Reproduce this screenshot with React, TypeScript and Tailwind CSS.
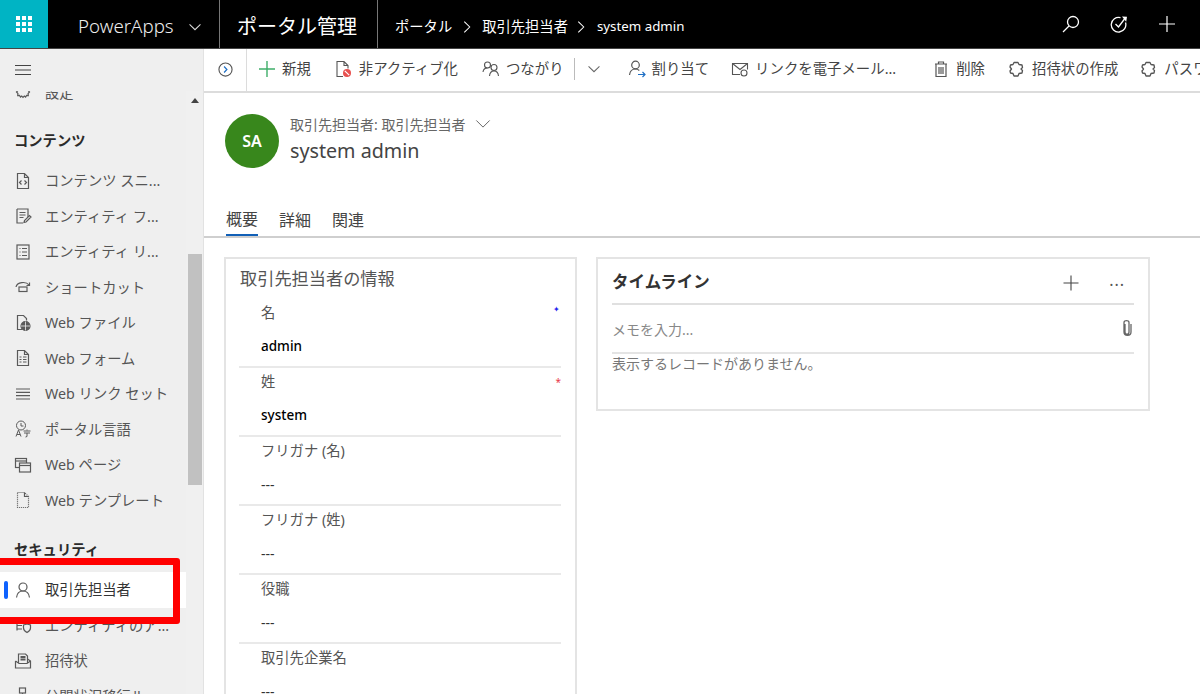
import React from "react";

const S = ({ children, className = "w-[18px] h-[18px]", w = 1.2 }: { children: React.ReactNode; className?: string; w?: number }) => (
  <svg viewBox="0 0 18 18" fill="none" stroke="currentColor" strokeWidth={w} className={className}>{children}</svg>
);

const gear = <path d="M6.5 4l1.2 1L9 3.6 10.3 5l1.3-1 1 1.6 1.7-.2-.2 2L15.5 9l-1.4 1.5.2 2-1.7-.1-1 1.6-1.3-1L9 14.4 7.7 13l-1.2 1-1-1.6-1.8.1.2-2L2.5 9l1.4-1.5-.2-2 1.8.1z" />;

const navIcons: Record<string, React.ReactNode> = {
  gear: <S>{gear}</S>,
  code: <S><path d="M3.5 1.5h7l4 4v11h-11z M10.5 1.5v4h4" /><path d="M7.5 8.5L5.5 10.5l2 2M10.5 8.5l2 2-2 2" /></S>,
  form: <S><path d="M3 2h11v8M3 2v14h6" /><path d="M5.5 5.5h6M5.5 8h6M5.5 10.5h4" /><path d="M10 15.5l.5-2 5-5 1.5 1.5-5 5z" /></S>,
  list: <S><rect x="3" y="2" width="12" height="14" /><path d="M5.5 5.5h1M8 5.5h5M5.5 9h1M8 9h5M5.5 12.500h1M8 12.500h5" /></S>,
  shortcut: <S><path d="M2 9c1-5 10-6 13-2" /><path d="M15.500 4.500V7.500h-3" /><rect x="5" y="9" width="8" height="4.500" /></S>,
  webfile: <S><path d="M8 15.500H3.500v-14h6l3 3v2" /><circle cx="11.500" cy="12" r="4.500" fill="currentColor" /><path d="M7 12h9M11.500 7.500v9" stroke="#efefef" strokeWidth="0.8" /></S>,
  webform: <S><path d="M3.500 1.500h7l4 4v11h-11z M10.500 1.500v4h4" /><path d="M5.500 8h2M9 8h3.500M5.500 10.500h2M9 10.500h3.500M5.500 13h2M9 13h3.500" /></S>,
  lines: <S><path d="M2 4h14M2 7.300h14M2 10.600h14M2 14h14" /></S>,
  lang: <S w={1}><circle cx="7" cy="5.500" r="4.500" /><path d="M7 3v3h2.500" /><path d="M2 16.500L4.500 10 7 16.500M3 14.500h3M9.500 11h7M13 9.500v1M10 13h6M13 13v3.500l-1.500.5" /></S>,
  page: <S><rect x="1.500" y="2.500" width="11" height="9" /><path d="M1.500 5h11" /><rect x="5.500" y="7" width="11" height="9" fill="#efefef" /><path d="M5.500 9.500h11" /></S>,
  template: <S><path d="M3.500 1.500h7l4 4v11h-11z" strokeDasharray="1 1" /><path d="M10.500 1.500v4h4" /></S>,
  person: <S><circle cx="9" cy="6" r="4" /><path d="M2.500 16.500c.5-4 3-6.500 6.500-6.500s6 2.500 6.500 6.500" /></S>,
  shield: <S><path d="M3 2.500h11M3 6h8M3 9.500h5M3 13h5M3 2.500v12" /><path d="M9.500 9l3.500-1 3.500 1v3c0 2-1.500 3.500-3.500 4.500-2-1-3.500-2.500-3.500-4.500z" /></S>,
  invite: <S><path d="M1.500 9v7h15V9l-3-2" /><path d="M4.500 11V2h7l2 2v7" /><path d="M1.500 9L5 11.500h8L16.500 9" /><path d="M6.500 5h5M6.500 7.500h5" strokeWidth="1.800" /></S>,
  workflow: <S><rect x="5.500" y="1" width="6" height="5" /><path d="M8.500 6v5" /><rect x="3" y="11" width="11" height="5" /></S>,
};

const NavRow = ({ icon, label, selected }: { icon: string; label: string; selected?: boolean }) => (
  <div className={`h-[35.5px] shrink-0 flex items-center relative text-[14.3px] text-[#555] whitespace-nowrap ${selected ? "bg-white" : ""}`}>
    {selected && <span className="absolute left-[4px] top-[9px] h-[18px] w-[4px] rounded-sm bg-[#0f62fe]" />}
    <span className="w-[45px] pl-[14px] shrink-0 text-[#5a5a5a]">{navIcons[icon]}</span>
    <span className={selected ? "text-[#333]" : ""}>{label}</span>
  </div>
);

const Heading = ({ children, className = "mt-[13px]" }: { children: React.ReactNode; className?: string }) => (
  <div className={`h-9 mb-[4px] pl-[14px] flex items-center text-[14.3px] font-bold text-[#2b2b2b] ${className}`}>{children}</div>
);

const Sidebar = () => (
  <aside className="w-[204px] shrink-0 bg-[#efefef] border-r border-[#e2e2e2] flex flex-col relative">
    <div className="h-[42px] shrink-0 pl-[14px] flex items-center text-[#444]">
      <S className="w-[18px] h-[18px]" w={1.1}><path d="M1 4.500h16M1 9h16M1 13.500h16" /></S>
    </div>
    <div className="flex-1 flex min-h-0">
      <div className="w-[186px] shrink-0 overflow-hidden">
        <div className="-mt-[16.5px] flex flex-col">
          <NavRow icon="gear" label="設定" />
          <Heading>コンテンツ</Heading>
          <NavRow icon="code" label="コンテンツ スニ..." />
          <NavRow icon="form" label="エンティティ フ..." />
          <NavRow icon="list" label="エンティティ リ..." />
          <NavRow icon="shortcut" label="ショートカット" />
          <NavRow icon="webfile" label="Web ファイル" />
          <NavRow icon="webform" label="Web フォーム" />
          <NavRow icon="lines" label="Web リンク セット" />
          <NavRow icon="lang" label="ポータル言語" />
          <NavRow icon="page" label="Web ページ" />
          <NavRow icon="template" label="Web テンプレート" />
          <Heading className="mt-[14px]">セキュリティ</Heading>
          <NavRow icon="person" label="取引先担当者" selected />
          <NavRow icon="shield" label="エンティティのア..." />
          <NavRow icon="invite" label="招待状" />
          <NavRow icon="workflow" label="公開状況移行ル..." />
        </div>
      </div>
      <div className="w-[17px] shrink-0 bg-[#f0f0f0] flex flex-col items-center pt-[7px]">
        <svg viewBox="0 0 8 5" className="w-2 h-[5px] text-[#444]" fill="currentColor"><path d="M4 0l4 5H0z" /></svg>
        <div className="w-[14px] h-[231px] mt-[151px] bg-[#c1c1c1]" />
      </div>
    </div>
    <div className="absolute -left-[8px] top-[509px] w-[188px] h-[66px] border-[7px] border-[#ff0000] rounded-[3px]" />
  </aside>
);

const TopBar = () => (
  <header className="h-[49px] shrink-0 bg-black text-white flex items-center border-b border-[#444]">
    <div className="w-[48px] h-full bg-[#00b4c4] grid grid-cols-3 gap-[2px] content-center justify-center px-[16px]">
      {Array.from({ length: 9 }).map((_, i) => <span key={i} className="w-[4px] h-[4px] bg-white" />)}
    </div>
    <span className="ml-[30px] mt-[5px] w-[96px] text-[18.7px] font-light text-[#eee] whitespace-nowrap">PowerApps</span>
    <S className="ml-[14px] mt-[5px] w-[14px] h-[14px] text-[#ddd]" w={1.3}><path d="M2 5.500l7 7 7-7" /></S>
    <span className="ml-[17px] w-px h-full bg-[#777]" />
    <span className="ml-[17px] mt-[5px] w-[122px] text-[20px] whitespace-nowrap">ポータル管理</span>
    <span className="ml-[18px] w-px h-full bg-[#777]" />
    <span className="ml-[17px] mt-[5px] text-[14.3px] whitespace-nowrap">ポータル</span>
    <S className="ml-[8px] mt-[5px] w-[14px] h-[14px]" w={1.3}><path d="M5.500 2l7 7-7 7" /></S>
    <span className="ml-[8px] mt-[5px] text-[14.3px] whitespace-nowrap">取引先担当者</span>
    <S className="ml-[6px] mt-[5px] w-[14px] h-[14px]" w={1.3}><path d="M5.500 2l7 7-7 7" /></S>
    <span className="ml-[9px] mt-[5px] text-[13.3px] whitespace-nowrap">system admin</span>
    <div className="ml-auto flex items-center gap-[30px] pr-[24px]">
      <S className="w-[18px] h-[18px]" w={1.3}><circle cx="11" cy="7" r="5.500" /><path d="M7 11l-6 6" /></S>
      <S className="w-[18px] h-[18px]" w={1.3}>
        <path d="M15.500 7.500A7.300 7.300 0 1 1 10.500 2.700" />
        <path d="M5.500 9l3 3 6-8" />
        <path d="M12 1.500l5 .2-.8 5z" fill="currentColor" stroke="none" />
      </S>
      <S className="w-[18px] h-[18px]" w={1.2}><path d="M9 1v16M1 9h16" /></S>
    </div>
  </header>
);

const Cmd = ({ icon, label, className = "" }: { icon: React.ReactNode; label: string; className?: string }) => (
  <div className={`flex items-center shrink-0 whitespace-nowrap text-[14.4px] text-[#444] ${className}`}>
    <span className="w-[24px] shrink-0 text-[#555]">{icon}</span>
    <span>{label}</span>
  </div>
);

const puzzle = <S w={1.300}><path d="M6 2.500h4l1 2 3 .5.500 2.500L13 9l1.500 1.500-.5 2.500-3 .5-1 2.500H6l-1-2.500-2.500-.5L2 11l1.500-2L2 7l.5-2 2.500-.5z" strokeLinejoin="round" /></S>;

const CommandBar = () => (
  <div className="h-[44px] shrink-0 border-b-2 border-[#dcdcdc] flex items-center overflow-hidden pb-[2px]">
    <div className="w-[43px] h-[44px] shrink-0 border-r border-[#dcdcdc] flex items-center justify-center">
      <svg viewBox="0 0 16 16" className="w-[15px] h-[15px]" fill="none">
        <circle cx="8" cy="8" r="7" stroke="#555" strokeWidth="1.200" />
        <path d="M6.500 4.800L9.500 8l-3 3.200" stroke="#1f6fc4" strokeWidth="1.300" />
      </svg>
    </div>
    <Cmd className="ml-[11px]" label="新規" icon={<span className="text-[#3fae6a]"><S w={1.400}><path d="M9 1v16M1 9h16" /></S></span>} />
    <Cmd className="ml-[24px]" label="非アクティブ化" icon={
      <svg viewBox="0 0 18 18" className="w-[18px] h-[18px] -ml-[1px]" fill="none" stroke="currentColor" strokeWidth="1.100">
        <path d="M9 16.500H3V1.500h7l4 4v3M10 1.500v4h4" />
        <circle cx="13" cy="13" r="4" fill="#e8504f" stroke="none" />
        <path d="M10.800 10.800l4.400 4.400" stroke="#fff" strokeWidth="1.200" />
      </svg>
    } />
    <Cmd className="ml-[24px]" label="つながり" icon={<S w={1.100}><circle cx="5.500" cy="5" r="3" /><path d="M1 12c.3-2.500 2-4 4.500-4" /><circle cx="12" cy="7.500" r="3" /><path d="M7.500 16c.3-3 2-5 4.500-5s4.200 2 4.500 5" /></S>} />
    <span className="ml-[10px] w-px h-[22px] bg-[#bbb] shrink-0" />
    <S className="ml-[12px] w-[14px] h-[14px] text-[#666] shrink-0" w={1.300}><path d="M2 5.500l7 7 7-7" /></S>
    <Cmd className="ml-[27px]" label="割り当て" icon={
      <svg viewBox="0 0 18 18" className="w-[18px] h-[18px]" fill="none" stroke="currentColor" strokeWidth="1.200">
        <circle cx="7.500" cy="5" r="3.800" />
        <path d="M1.500 15c.4-3.500 2.800-6 6-6 1.500 0 2.800.5 3.800 1.500" />
        <path d="M10 14.500h7M14.500 12l2.500 2.500-2.500 2.500" stroke="#1f6fc4" />
      </svg>
    } />
    <Cmd className="ml-[22px]" label="リンクを電子メール..." icon={
      <S w={1.100}><path d="M9 14.500H1.500v-11h15v6" /><path d="M1.500 3.500L9 9.500l7.500-6" /><circle cx="13" cy="13" r="3" /></S>
    } />
    <Cmd className="ml-[36px]" label="削除" icon={<S w={1.200}><path d="M3 4h12M6.500 4V2h5v2M4 4v12.500h10V4M7 7v7M9 7v7M11 7v7" /></S>} />
    <Cmd className="ml-[23px]" label="招待状の作成" icon={puzzle} />
    <Cmd className="ml-[22px]" label="パスワードのリセット" icon={puzzle} />
  </div>
);

const Field = ({ label, value, mark, bold }: { label: string; value: string; mark?: "blue" | "red"; bold?: boolean }) => (
  <div className="h-[69px] shrink-0 border-b-2 border-[#e9e9e9] ml-[13px] mr-[14px] relative">
    <div className="h-[28px] pl-[22px] flex items-center text-[14.3px] text-[#555]">{label}</div>
    <div className={`h-[38px] pl-[22px] flex items-center ${bold ? "text-[13.5px] font-medium text-black" : "text-[14px] text-[#333]"}`}>{value}</div>
    {mark === "blue" && <span className="absolute right-[1px] top-[4px] text-[8px] leading-[12px] text-[#2222ee]">✦</span>}
    {mark === "red" && <span className="absolute right-[0px] top-[8px] text-[10px] leading-[12px] text-[#e83a4a]">*</span>}
  </div>
);

const Content = () => (
  <main className="flex-1 min-w-0 flex flex-col bg-white overflow-hidden">
    <CommandBar />
    <div className="h-[145px] shrink-0 flex flex-col border-b-2 border-[#cfcfcf]">
      <div className="flex pl-[21px] pt-[21px]">
        <div className="w-[54px] h-[54px] rounded-full bg-[#38871c] text-white flex items-center justify-center text-[16px] font-semibold">SA</div>
        <div className="ml-[11px] flex flex-col">
          <div className="h-[20px] flex items-center text-[14px] text-[#666]">
            取引先担当者: 取引先担当者
            <S className="ml-[10px] w-[16px] h-[16px] text-[#555]" w={1}><path d="M1.500 5l7.500 7.500L16.500 5" /></S>
          </div>
          <div className="h-[34px] flex items-center text-[19.700px] text-[#444]">system admin</div>
        </div>
      </div>
      <div className="mt-auto flex pl-[22px] gap-[21px] text-[16px] text-[#444]">
        <div className="h-[36px] pt-[4px] border-b-2 border-[#1160b7] -mb-[1px] relative flex items-center">概要</div>
        <div className="h-[36px] pt-[4px] flex items-center">詳細</div>
        <div className="h-[36px] pt-[4px] flex items-center">関連</div>
      </div>
    </div>
    <div className="flex-1 min-h-0 flex items-start pl-[20px] pr-[50px] pt-[19px] gap-[19px]">
      <section className="w-[353px] shrink-0 border-2 border-[#e4e4e4] flex flex-col h-[460px] overflow-hidden">
        <h2 className="h-[40px] pl-[14px] flex items-center text-[17.2px] text-[#555] font-normal shrink-0">取引先担当者の情報</h2>
        <div className="flex flex-col">
          <Field label="名" value="admin" mark="blue" bold />
          <Field label="姓" value="system" mark="red" bold />
          <Field label="フリガナ (名)" value="---" />
          <Field label="フリガナ (姓)" value="---" />
          <Field label="役職" value="---" />
          <Field label="取引先企業名" value="---" />
        </div>
      </section>
      <section className="flex-1 h-[154px] border-2 border-[#e4e4e4] px-[14px] flex flex-col">
        <div className="h-[46px] pt-[3px] shrink-0 border-b-2 border-[#e0e0e0] flex items-center">
          <span className="text-[16.5px] font-semibold text-[#333]">タイムライン</span>
          <S className="ml-auto mr-[29px] w-[18px] h-[18px] text-[#444]" w={1.100}><path d="M9 1.500v15M1.500 9h15" /></S>
          <span className="mr-[9px] text-[16px] leading-none text-[#555] -mt-[6px] tracking-[1px]">...</span>
        </div>
        <div className="h-[49px] pt-[2px] shrink-0 border-b-2 border-[#e4e4e4] flex items-center text-[14px] text-[#888]">
          <span>メモを入力...</span>
          <svg viewBox="0 0 10 18" className="ml-auto mr-[2px] -mt-[4px] w-[10px] h-[18px] text-[#666]" fill="none" stroke="currentColor" strokeWidth="1.300">
            <path d="M3 5v8c0 3 4 3 4 0V3.500C7 1 2 1 2 3.500V13c0 4.500 7 4.500 7 0V5" />
          </svg>
        </div>
        <div className="text-[14px] leading-[20px] text-[#777]">表示するレコードがありません。</div>
      </section>
    </div>
  </main>
);

export default function App() {
  return (
    <div className="w-[1200px] h-[694px] overflow-hidden flex flex-col bg-white font-['Noto_Sans','Noto_Sans_CJK_JP',sans-serif]">
      <TopBar />
      <div className="flex-1 min-h-0 flex">
        <Sidebar />
        <Content />
      </div>
    </div>
  );
}
